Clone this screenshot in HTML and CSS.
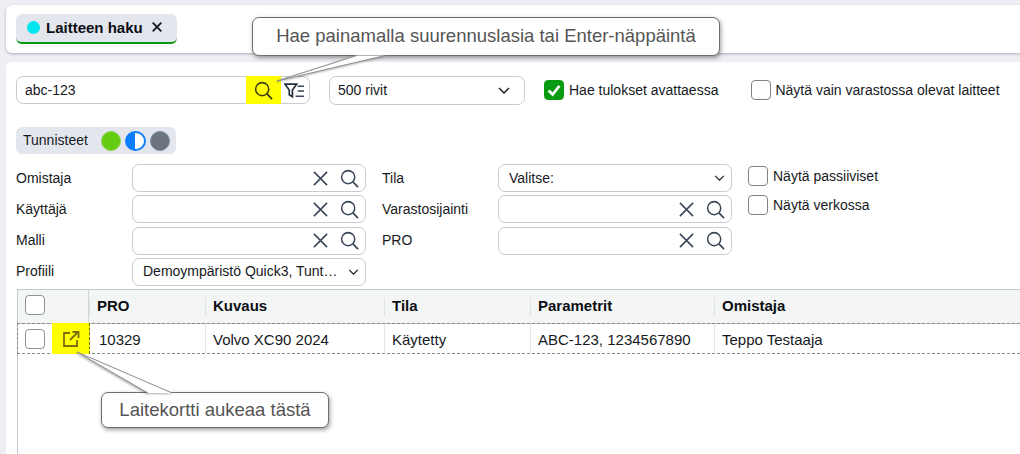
FILE: index.html
```html
<!DOCTYPE html>
<html lang="fi">
<head>
<meta charset="utf-8">
<title>Laitteen haku</title>
<link rel="stylesheet" href="styles.css">
</head>
<body>
<svg width="0" height="0" class="defs">
  <symbol id="search" viewBox="0 0 20 20"><circle cx="8.6" cy="8.6" r="6.9" fill="none" stroke="currentColor" stroke-width="1.6"/><path d="M13.6 13.6L19 19" stroke="currentColor" stroke-width="1.8" fill="none"/></symbol>
  <symbol id="cross" viewBox="0 0 16 16"><path d="M1 1L15 15M15 1L1 15" stroke="currentColor" stroke-width="1.7" fill="none"/></symbol>
  <symbol id="chev" viewBox="0 0 12 7"><path d="M1 1L6 6L11 1" stroke="currentColor" stroke-width="1.5" fill="none"/></symbol>
</svg>
<header class="topbar">
  <div class="tab">
    <span class="tab-dot"></span>
    <span class="tab-title">Laitteen haku</span>
    <svg class="tab-x" viewBox="0 0 10 10"><path d="M.7 .7L9.300 9.300M9.300 .7L.7 9.300" stroke="#14171c" stroke-width="1.8" fill="none"/></svg>
  </div>
</header>
<main class="panel">
  <div class="search-row">
    <div class="box searchbox">
      <span class="box-text">abc-123</span>
      <span class="hl"><svg class="ic-main"><use href="#search"/></svg></span>
      <svg class="ic-filter" viewBox="0 0 19 14"><path d="M1 1H12L8 6.500V13L5 11V6.500Z" fill="none" stroke="#24303f" stroke-width="1.6"/><path d="M13 3H19M13 7.500H19M11 12.500H19" stroke="#3b4658" stroke-width="1.3"/></svg>
    </div>
    <div class="box rows"><span class="box-text">500 rivit</span><svg class="ic-chev"><use href="#chev"/></svg></div>
    <label class="check first"><span class="cb on"><svg viewBox="0 0 20 20"><path d="M4 10.500L8.500 15L16 5.500" stroke="#fff" stroke-width="3" fill="none"/></svg></span>Hae tulokset avattaessa</label>
    <label class="check second"><span class="cb"></span>Näytä vain varastossa olevat laitteet</label>
  </div>
  <div class="tags">
    <span class="tags-label">Tunnisteet</span>
    <span class="dot green"></span>
    <span class="dot half"></span>
    <span class="dot grey"></span>
  </div>
  <div class="form">
    <span class="lbl">Omistaja</span>
    <div class="box field"><svg class="ic-x"><use href="#cross"/></svg><svg class="ic-s"><use href="#search"/></svg></div>
    <span class="lbl">Tila</span>
    <div class="box field sel"><span class="box-text">Valitse:</span><svg class="ic-chev small"><use href="#chev"/></svg></div>
    <div class="side">
      <label class="check"><span class="cb"></span>Näytä passiiviset</label>
      <label class="check"><span class="cb"></span>Näytä verkossa</label>
    </div>
    <span class="lbl">Käyttäjä</span>
    <div class="box field"><svg class="ic-x"><use href="#cross"/></svg><svg class="ic-s"><use href="#search"/></svg></div>
    <span class="lbl">Varastosijainti</span>
    <div class="box field"><svg class="ic-x"><use href="#cross"/></svg><svg class="ic-s"><use href="#search"/></svg></div>
    <span class="lbl">Malli</span>
    <div class="box field"><svg class="ic-x"><use href="#cross"/></svg><svg class="ic-s"><use href="#search"/></svg></div>
    <span class="lbl">PRO</span>
    <div class="box field"><svg class="ic-x"><use href="#cross"/></svg><svg class="ic-s"><use href="#search"/></svg></div>
    <span class="lbl">Profiili</span>
    <div class="box field sel"><span class="box-text ell">Demoympäristö Quick3, Tunt…</span><svg class="ic-chev small"><use href="#chev"/></svg></div>
  </div>
  <section class="table">
    <div class="thead">
      <div class="c c0 th0"><span class="cb"></span></div>
      <div class="c c1"><b>PRO</b></div>
      <div class="c c2"><b>Kuvaus</b></div>
      <div class="c c3"><b>Tila</b></div>
      <div class="c c4"><b>Parametrit</b></div>
      <div class="c c5"><b>Omistaja</b></div>
    </div>
    <div class="tr">
      <div class="c c0"><span class="cb"></span><span class="open"><svg viewBox="0 0 18 18"><path d="M8 3H2V16H15V10" fill="none" stroke="#7c6f0a" stroke-width="1.8"/><path d="M8 10L16 2M10.500 2H16.500V8" fill="none" stroke="#7c6f0a" stroke-width="1.8"/></svg></span></div>
      <div class="c c1">10329</div>
      <div class="c c2">Volvo XC90 2024</div>
      <div class="c c3">Käytetty</div>
      <div class="c c4">ABC-123, 1234567890</div>
      <div class="c c5">Teppo Testaaja</div>
    </div>
  </section>
</main>
<div class="callout c-top">Hae painamalla suurennuslasia tai Enter-näppäintä</div>
<div class="callout c-bottom">Laitekortti aukeaa tästä</div>
<svg class="pointers" width="1020" height="454" viewBox="0 0 1020 454">
  <path class="tail" d="M357 55.500L277 81L385 55.500"/>
  <path class="tail" d="M148 393L77 352L172 393"/>
</svg>
</body>
</html>
```
FILE: styles.css
```css
* { box-sizing: border-box; }
html, body { margin: 0; height: 454px; overflow: hidden; }
body {
  background: #eeeff4;
  font: 14px/1.2 "Liberation Sans", Arial, sans-serif;
  color: #16191d;
  position: relative;
  padding: 5px 0 0 6px;
}
.defs { position: absolute; }
.topbar {
  height: 48px;
  background: #fff;
  border-radius: 6px 0 0 6px;
  box-shadow: 0 1px 3px rgba(90, 95, 110, .45);
  padding: 9px 0 0 10px;
}
.tab {
  width: 161px;
  height: 30px;
  background: #e3e6ed;
  border-radius: 6px;
  border-bottom: 2px solid #0b9b12;
  display: flex;
  align-items: center;
  padding: 0 0 1px 11px;
}
.tab-dot { width: 13px; height: 13px; border-radius: 50%; background: #00e5ee; }
.tab-title { margin-left: 6px; font-size: 15px; font-weight: 700; color: #0c0f14; }
.tab-x { width: 10px; height: 10px; margin: -2px 0 0 9px; }
.panel {
  margin-top: 9px;
  height: 400px;
  background: #fff;
  border-radius: 6px 0 0 0;
  padding: 14px 0 0 10px;
}
.box {
  background: #fff;
  border: 1px solid #c9cbcf;
  border-radius: 7px;
  display: flex;
  align-items: center;
}
.search-row { display: flex; align-items: center; height: 28px; }
.searchbox { width: 294px; height: 28px; padding-left: 8px; }
.box-text { flex: 1; min-width: 0; }
.hl {
  width: 35px;
  height: 28px;
  margin-right: 3px;
  background: #ffff00;
  display: flex;
  align-items: center;
  justify-content: center;
}
.ic-main { width: 19px; height: 19px; color: #3b3c12; }
.ic-filter { width: 20px; height: 15px; margin-right: 5px; }
.rows { width: 196px; height: 29px; margin-left: 19px; padding: 0 14px 0 8px; }
.ic-chev { width: 12px; height: 7px; color: #20262e; }
.ic-chev.small { width: 11px; height: 6px; }
.check { display: flex; align-items: center; gap: 5px; color: #16191d; }
.check.first { margin-left: 19px; }
.check.second { margin-left: 33px; gap: 4px; }
.cb {
  width: 20px;
  height: 20px;
  flex: none;
  background: #fff;
  border: 1px solid #7f8488;
  border-radius: 4px;
  display: inline-block;
}
.cb.on { background: #0b9b12; border-color: #0b9b12; }
.cb svg { display: block; width: 18px; height: 18px; }
.tags {
  width: 160px;
  height: 27px;
  margin-top: 23px;
  background: #e3e6ed;
  border-radius: 6px;
  display: flex;
  align-items: center;
  padding-left: 7px;
}
.tags-label { width: 78px; }
.dot { width: 20px; height: 20px; border-radius: 50%; margin-right: 4px; }
.green { background: #66cc11; border: 1px solid #8fd14f; }
.half { width: 21px; background: linear-gradient(90deg, #0d7dfb 50%, #fff 50%); border: 2px solid #0d7dfb; }
.grey { background: #6c757d; border: 1px solid #7a8ba0; }
.form {
  display: grid;
  grid-template-columns: 116px 234px 132px 234px 1fr;
  grid-auto-rows: 28px;
  row-gap: 3.3px;
  margin-top: 10px;
  align-items: center;
}
.form > .lbl:nth-of-type(even) { padding-left: 16px; }
.lbl { color: #16191d; display: block; }
.form > .lbl { align-self: center; }
.field { height: 28px; justify-content: flex-end; padding-right: 6px; }
.sel { padding: 0 6px 0 10px; }
.ell { overflow: hidden; white-space: nowrap; }
.ic-x { width: 15px; height: 15px; color: #3b4658; margin-right: 12px; }
.ic-s { width: 19px; height: 19px; color: #3b4658; }
.side {
  grid-row: 1 / span 3;
  grid-column: 5;
  align-self: start;
  display: flex;
  flex-direction: column;
  gap: 9px;
  padding: 2px 0 0 16px;
}
.table {
  margin: 3px 0 0 1px;
  height: 166px;
  border-left: 1px solid #c3c9cf;
  border-top: 1px solid #c3c9cf;
}
.thead { display: flex; height: 34px; background: #f4f6f6; border-bottom: 1px solid #c3c9cf; }
.thead .cb { margin-top: -2px; }
.tr { display: flex; height: 31px; border-bottom: 1px dashed #8a8a8a; border-top: 1px dashed #8a8a8a; margin: -1px 0 0 -1px; border-left: 1px dashed #8a8a8a; }
.c { display: flex; align-items: center; padding-left: 8px; font-size: 15px; }
.thead .c { position: relative; }
.thead .c:not(.c0)::before { content: ""; position: absolute; left: 0; top: 8px; bottom: 7px; width: 1px; background: #dfe2e5; }
.tr .c:not(.c0):not(.c1) { border-left: 1px solid #e3e5e8; padding: 3px 0 0 7px; }
.tr .c1 { padding: 3px 0 0 9px; width: 115px; }
.c0 { width: 71px; padding-left: 7px; }
.tr .c0 { width: 72px; }
.tr .cb { margin-top: 2px; }
.th0 { border-right: 1px solid #d3d6da; }
.c1 { width: 116px; }
.c2 { width: 179px; }
.c3 { width: 146px; }
.c4 { width: 184px; }
.c5 { flex: 1; }
.c b { color: #0c0f14; }
.c .cb { border-color: #8d9499; }
.open {
  width: 38px;
  align-self: stretch;
  margin: -1px 0 -1px 7px;
  background: #ffff00;
  border-right: 1px dashed #6d6d10;
  display: flex;
  align-items: center;
  justify-content: center;
}
.open svg { width: 18px; height: 18px; margin-top: 1px; }
.pointers { position: absolute; left: 0; top: 0; pointer-events: none; }
.tail { fill: #fff; stroke: #8f8f8f; stroke-width: 1; filter: drop-shadow(-1px 1px 1px rgba(70, 70, 70, .45)); }
.callout {
  position: absolute;
  background: #fff;
  border: 1px solid #6e6e6e;
  border-radius: 7px;
  box-shadow: 1px 2px 4px rgba(60, 60, 60, .5);
  color: #555;
  font-size: 18.5px;
  display: flex;
  align-items: center;
  justify-content: center;
}
.c-top { left: 252px; top: 17px; width: 468px; height: 39px; }
.c-bottom { left: 101px; top: 392px; width: 228px; height: 36px; }
```
